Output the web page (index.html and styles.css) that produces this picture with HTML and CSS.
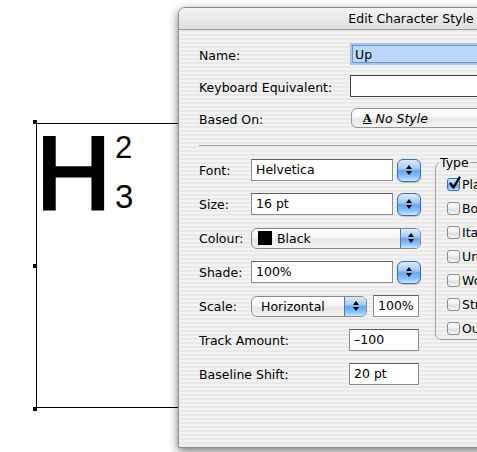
FILE: index.html
```html
<!DOCTYPE html>
<html>
<head>
<meta charset="utf-8">
<link rel="stylesheet" href="styles.css">
</head>
<body>
<div class="frame">
  <span class="big">H</span>
  <span class="stack"><span class="sup">2</span><span class="sub">3</span></span>
  <span class="handle handle-top"></span>
  <span class="handle handle-mid"></span>
  <span class="handle handle-bot"></span>
</div>

<div class="dialog">
  <div class="titlebar">Edit Character Style</div>
  <div class="content">
    <div class="top-grid">
      <span class="lbl">Name:</span>
      <div class="field focus">Up</div>
      <span class="lbl">Keyboard Equivalent:</span>
      <div class="field dark"></div>
      <span class="lbl">Based On:</span>
      <div class="popup wide"><span class="style-a">A</span><span class="italic">No Style</span></div>
    </div>
    <hr class="sep">
    <div class="lower">
      <div class="attrs">
        <div class="row">
          <span class="lbl lbl-s">Font:</span>
          <div class="field w142">Helvetica</div>
          <span class="stepper"><svg width="8" height="12" viewBox="0 0 8 12"><path d="M4 1 L7 5 L1 5 Z M4 11 L7 7 L1 7 Z" fill="#000"/></svg></span>
        </div>
        <div class="row">
          <span class="lbl lbl-s">Size:</span>
          <div class="field w142">16 pt</div>
          <span class="stepper"><svg width="8" height="12" viewBox="0 0 8 12"><path d="M4 1 L7 5 L1 5 Z M4 11 L7 7 L1 7 Z" fill="#000"/></svg></span>
        </div>
        <div class="row">
          <span class="lbl lbl-s">Colour:</span>
          <div class="popup w170">
            <span class="swatch"></span><span class="ptext">Black</span>
            <span class="pend"><svg width="8" height="12" viewBox="0 0 8 12"><path d="M4 1 L7 5 L1 5 Z M4 11 L7 7 L1 7 Z" fill="#000"/></svg></span>
          </div>
        </div>
        <div class="row">
          <span class="lbl lbl-s">Shade:</span>
          <div class="field w142">100%</div>
          <span class="stepper"><svg width="8" height="12" viewBox="0 0 8 12"><path d="M4 1 L7 5 L1 5 Z M4 11 L7 7 L1 7 Z" fill="#000"/></svg></span>
        </div>
        <div class="row">
          <span class="lbl lbl-s">Scale:</span>
          <div class="popup w116">
            <span class="ptext pad">Horizontal</span>
            <span class="pend e22"><svg width="8" height="12" viewBox="0 0 8 12"><path d="M4 1 L7 5 L1 5 Z M4 11 L7 7 L1 7 Z" fill="#000"/></svg></span>
          </div>
          <div class="field w46">100%</div>
        </div>
        <div class="row">
          <span class="lbl lbl-l">Track Amount:</span>
          <div class="field w70">–100</div>
        </div>
        <div class="row">
          <span class="lbl lbl-l">Baseline Shift:</span>
          <div class="field w70">20 pt</div>
        </div>
      </div>
      <fieldset class="typebox">
        <legend>Type</legend>
        <div class="checks">
          <div class="check"><span class="box on"><svg width="13" height="14" viewBox="0 0 13 14"><path d="M2.5 7.5 L5.5 11.5 L11.5 1.5" fill="none" stroke="#000" stroke-width="2.4" stroke-linecap="round" stroke-linejoin="round"/></svg></span><span class="clbl">Plain</span></div>
          <div class="check"><span class="box"></span><span class="clbl">Bold</span></div>
          <div class="check"><span class="box"></span><span class="clbl">Italic</span></div>
          <div class="check"><span class="box"></span><span class="clbl">Underline</span></div>
          <div class="check"><span class="box"></span><span class="clbl">Word u.l.</span></div>
          <div class="check"><span class="box"></span><span class="clbl">Strike Thru</span></div>
          <div class="check"><span class="box"></span><span class="clbl">Outline</span></div>
        </div>
      </fieldset>
    </div>
  </div>
</div>
</body>
</html>
```

FILE: styles.css
```css
html, body {
  margin: 0;
  padding: 0;
}
body {
  width: 477px;
  height: 452px;
  overflow: hidden;
  position: relative;
  background: #fff;
  font-family: "DejaVu Sans", "Liberation Sans", sans-serif;
  font-size: 12.5px;
  color: #000;
}

/* canvas text frame */
.frame {
  position: absolute;
  left: 36px;
  top: 123px;
  width: 180px;
  height: 285px;
  box-sizing: border-box;
  border: 1px solid #000;
  padding-top: 10px;
  display: flex;
  align-items: flex-start;
}
.big {
  font-family: "Liberation Sans", Arial, sans-serif;
  font-size: 104px;
  line-height: 0.75;
  -webkit-text-stroke: 3px #000;
  margin-left: -1px;
}
.stack {
  display: flex;
  flex-direction: column;
  margin-left: 4px;
  margin-top: -2px;
  font-family: "Liberation Sans", Arial, sans-serif;
}
.sup {
  font-size: 31px;
  line-height: 31px;
}
.sub {
  font-size: 33px;
  line-height: 33px;
  margin-top: 17px;
}
.handle {
  position: absolute;
  left: -4px;
  width: 4px;
  height: 4px;
  background: #000;
}
.handle-top { top: -4px; }
.handle-mid { top: 140px; }
.handle-bot { top: 283px; }

/* dialog window */
.dialog {
  position: absolute;
  left: 178px;
  top: 7px;
  width: 466px;
  height: 441px;
  box-sizing: border-box;
  border: 1px solid #8e8e8e;
  border-radius: 7px 7px 0 0;
  overflow: hidden;
  box-shadow: 0 3px 10px rgba(0,0,0,0.55);
  background: repeating-linear-gradient(to bottom, #f2f2f2 0 2px, #e9e9e9 2px 4px);
}
.titlebar {
  height: 21px;
  line-height: 22px;
  text-align: center;
  font-size: 12.5px;
  border-bottom: 1px solid #9a9a9a;
  background:
    repeating-linear-gradient(to bottom, rgba(255,255,255,0.25) 0 1px, rgba(0,0,0,0) 1px 2px),
    linear-gradient(#f3f3f3, #dadada);
}
.content {
  padding-left: 20px;
}
.top-grid {
  margin-top: 13px;
  display: grid;
  grid-template-columns: 151px 1fr;
  grid-auto-rows: 22px;
  row-gap: 10px;
  align-items: center;
}
.lbl {
  white-space: nowrap;
}
.top-grid .lbl {
  padding-top: 2px;
}
.field {
  box-sizing: border-box;
  height: 22px;
  line-height: 20px;
  padding: 0 4px;
  background: #fff;
  border: 1px solid #8d8d8d;
  border-top-color: #5e5e5e;
  white-space: nowrap;
  overflow: hidden;
}
.field.focus {
  height: 18px;
  line-height: 17px;
  margin-left: 2px;
  background: #bcd6f9;
  border: 1px solid #7096c8;
  box-shadow: 0 0 0 2px #a6c4ec;
  padding-left: 2px;
}
.field.dark {
  border-color: #444;
}
.popup {
  box-sizing: border-box;
  height: 21px;
  border: 1px solid #8a8a8a;
  border-radius: 6px;
  background: linear-gradient(#ffffff 0%, #f6f6f6 45%, #e6e6e6 55%, #f4f4f4 100%);
  display: flex;
  align-items: center;
  overflow: hidden;
  white-space: nowrap;
}
.popup.wide {
  height: 20px;
  margin-left: 1px;
  padding-left: 11px;
  border-color: #949494;
}
.style-a {
  font-family: "DejaVu Serif", serif;
  font-weight: bold;
  font-size: 11px;
  text-decoration: underline;
  margin-right: 4px;
}
.italic {
  font-style: italic;
}
.sep {
  margin: 16px 20px 0 0;
  height: 0;
  border: 0;
  border-top: 1px solid #9f9f9f;
}
.lower {
  display: flex;
  align-items: flex-start;
  gap: 14px;
}
.attrs {
  width: 222px;
  flex: none;
  margin-top: 13px;
  display: flex;
  flex-direction: column;
  gap: 12px;
}
.row {
  height: 22px;
  display: flex;
  align-items: center;
}
.lbl-s { width: 52px; flex: none; }
.lbl-l { width: 150px; flex: none; }
.w142 { width: 142px; flex: none; }
.w46 { width: 46px; margin-left: 6px; flex: none; }
.w70 { width: 70px; flex: none; }
.w170 { width: 170px; flex: none; }
.w116 { width: 116px; flex: none; }
.stepper {
  box-sizing: border-box;
  width: 24px;
  height: 23px;
  margin-left: 4px;
  flex: none;
  border: 1px solid #3f6cab;
  border-radius: 6px;
  background: linear-gradient(#dcebfc 0%, #a6cbf3 40%, #6aa4ec 52%, #8cc2fb 80%, #c8e8ff 100%);
  display: flex;
  align-items: center;
  justify-content: center;
  box-shadow: 0 1px 1px rgba(0,0,0,0.2);
}
.pend {
  margin-left: auto;
  width: 20px;
  height: 100%;
  box-sizing: border-box;
  border-left: 1px solid #4a78b8;
  background: linear-gradient(#dcebfc 0%, #a6cbf3 40%, #6aa4ec 52%, #8cc2fb 80%, #c8e8ff 100%);
  display: flex;
  align-items: center;
  justify-content: center;
  flex: none;
}
.pend.e22 { width: 22px; }
.swatch {
  width: 14px;
  height: 14px;
  background: #000;
  margin-left: 6px;
  flex: none;
}
.ptext {
  margin-left: 5px;
}
.ptext.pad {
  margin-left: 9px;
}
.typebox {
  margin: 9px 0 0 0;
  padding: 7px 0 4px 11px;
  width: 300px;
  min-width: 0;
  border: 1px solid #a3a3a3;
  border-radius: 6px;
}
.typebox legend {
  padding: 0 1px;
  margin-left: -8px;
  line-height: 15px;
}
.checks {
  display: flex;
  flex-direction: column;
  gap: 10px;
}
.check {
  height: 14px;
  display: flex;
  align-items: center;
}
.box {
  box-sizing: border-box;
  width: 13px;
  height: 13px;
  border: 1px solid #8c8c8c;
  border-radius: 3px;
  background: linear-gradient(#ffffff 0%, #f0f0f0 45%, #dedede 55%, #f6f6f6 100%);
  position: relative;
  flex: none;
}
.box.on {
  border-color: #3f6cab;
  background: linear-gradient(#dcebfc 0%, #a6cbf3 40%, #6aa4ec 52%, #8cc2fb 80%, #c8e8ff 100%);
}
.box.on svg {
  position: absolute;
  left: 0;
  top: -3px;
}
.clbl {
  margin-left: 2px;
  white-space: nowrap;
}
```
